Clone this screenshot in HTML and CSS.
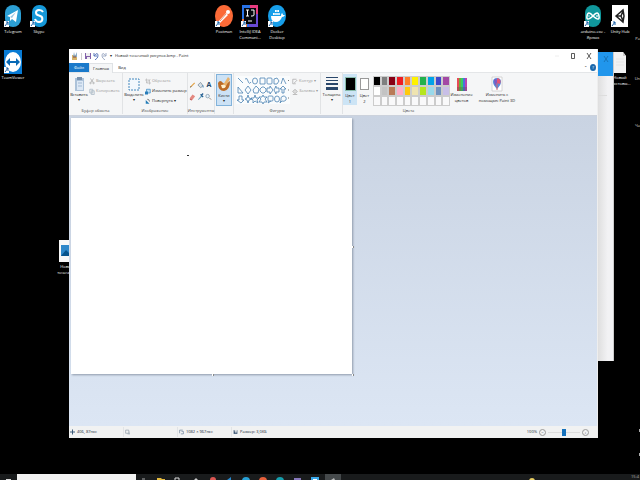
FILE: index.html
```html
<!DOCTYPE html>
<html lang="ru">
<head>
<meta charset="utf-8">
<title>Новый точечный рисунок.bmp - Paint</title>
<link rel="stylesheet" href="styles.css">
</head>
<body>
<main class="desktop">
  <a class="shortcut at-telegram" href="#"><svg viewBox="0 0 18 24"><rect x="1" y="1" width="16" height="22" rx="8" fill="#2c9fd4"/><path d="M3 12 14 6 12 18 8 15 6 17 6 13Z" fill="#fff"/><path d="M6 13 12 8 8 14Z" fill="#9cc8e4"/><path d="M0 17h5v6H0z" fill="#fff"/><path d="M1 22 4 18M2 18h2v3" stroke="#1760a8" fill="none"/></svg><span>Telegram</span></a>
  <a class="shortcut at-skype" href="#"><svg viewBox="0 0 18 24"><rect x="2" y="1" width="15" height="22" rx="7" fill="#1598d8"/><path d="M13 8Q12 6 9 6C5 6 5 11 9 11.500C14 12.500 13 18 9 18Q6 18 5 15" stroke="#fff" stroke-width="2" fill="none"/><path d="M0 17h5v6H0z" fill="#fff"/><path d="M1 22 4 18M2 18h2v3" stroke="#1760a8" fill="none"/></svg><span>Skype</span></a>
  <a class="shortcut at-teamviewer" href="#"><svg viewBox="0 0 18 24"><path d="M0 0h18v24H0z" fill="#087bd4"/><ellipse cx="9" cy="12" rx="8" ry="10" fill="#fff"/><path d="M2 12 6 8v3h6V8l4 4-4 4v-3H6v3Z" fill="#0869b5"/><path d="M0 17h5v6H0z" fill="#fff"/><path d="M1 22 4 18M2 18h2v3" stroke="#1760a8" fill="none"/></svg><span>TeamViewer</span></a>
  <a class="shortcut at-postman" href="#"><svg viewBox="0 0 18 24"><ellipse cx="9" cy="12" rx="9" ry="11" fill="#fb6a37"/><path d="m3 18 8-9 2 2-8 8Z" fill="#fff"/><circle cx="13" cy="8" r="2" fill="#fff"/><path d="m5 17 6-7" stroke="#e29070"/><path d="M0 17h5v6H0z" fill="#fff"/><path d="M1 22 4 18M2 18h2v3" stroke="#1760a8" fill="none"/></svg><span>Postman</span></a>
  <a class="shortcut at-idea" href="#"><svg viewBox="0 0 18 24"><path d="M1 1h9v22H1z" fill="#2873e8"/><path d="M9 1h8v9H9z" fill="#e83b80"/><path d="M8 10h9v13H8z" fill="#694ad6"/><path d="M1 15h5v8H1z" fill="#f27642"/><path d="M3 4h12v16H3z" fill="#05070d"/><path d="M5 6h3M6.500 6v6M5 12h3M10 6h3v5q0 1-2 1h-1M7 17h4" stroke="#fff" fill="none"/><path d="M0 17h5v6H0z" fill="#fff"/><path d="M1 22 4 18M2 18h2v3" stroke="#1760a8" fill="none"/></svg><span>IntelliJ IDEA<br>Communi...</span></a>
  <a class="shortcut at-docker" href="#"><svg viewBox="0 0 18 24"><ellipse cx="9" cy="12" rx="9" ry="11" fill="#179ee9"/><path d="M3 12h10q0-2 1-3 1 1 1 2h2q-1 2-3 2-2 5-6 5-5 0-5-6Z" fill="#fff"/><path d="M5 9h7v2H5zM7 6h4v2H7z" fill="#fff"/><path d="M7 9v2M9 6v5M11 9v2" stroke="#179ee9" stroke-width=".5"/><path d="M0 17h5v6H0z" fill="#fff"/><path d="M1 22 4 18M2 18h2v3" stroke="#1760a8" fill="none"/></svg><span>Docker<br>Desktop</span></a>
  <a class="shortcut at-arduino" href="#"><svg viewBox="0 0 18 24"><rect x="1" y="1" width="16" height="22" rx="8" fill="#10979c"/><path d="M9 12Q4 6 3 12T9 12Q14 6 15 12T9 12Z" stroke="#fff" stroke-width="1.500" fill="none"/><path d="M4 12h2M12 12h2M13 11v2" stroke="#fff" stroke-width=".7"/><path d="M0 17h5v6H0z" fill="#fff"/><path d="M1 22 4 18M2 18h2v3" stroke="#1760a8" fill="none"/></svg><span>arduino.exe -<br>Ярлык</span></a>
  <a class="shortcut at-unity" href="#"><svg viewBox="0 0 18 24"><path d="M1 1h16v22H1z" fill="#fff"/><path d="m5 12 7-6 1 6-1 6ZM5 12h5M10 12l2-5M10 12l2 5" stroke="#222" stroke-width="1.500" fill="none"/><path d="M0 17h5v6H0z" fill="#fff"/><path d="M1 22 4 18M2 18h2v3" stroke="#1760a8" fill="none"/></svg><span>Unity Hub</span></a>
  <a class="shortcut at-file" href="#"><svg viewBox="0 0 18 24"><path d="M3 2h9l3 4v17H3z" fill="#f1f1f1"/><path d="M12 2v4h3" fill="#ccc"/><path d="M5 9h8M5 12h8M5 15h8" stroke="#ddd" stroke-width=".6"/></svg><span>Новый<br>текстовы...</span></a>
  <a class="shortcut at-image" href="#"><svg viewBox="0 0 18 24"><path d="M1 1h17v22H1z" fill="#f7f7f7"/><path d="M3 6h15v11H3z" fill="#2e87c9"/><path d="m3 17 5-6 3 3 3-4 4 3v4Z" fill="#07538c"/></svg><span>Новый<br>точечный</span></a>
  <span class="edge-label at-edge1">Ра</span><span class="edge-label at-edge2">Un</span><span class="edge-label at-edge3">Ча</span><i class="edge-dot at-edge4"></i><i class="edge-dot at-edge5"></i>

  <section class="back-window"><header><button aria-label="Закрыть окно"><svg class="glyph" viewBox="0 0 8 8"><path d="m2 1 4 6M6 1 2 7" stroke="#176ba9" stroke-width=".8"/></svg></button></header><hr></section>

  <section class="paint">
    <header class="titlebar">
      <svg class="glyph" viewBox="0 0 8 8"><path d="M1 3h5v5H1z" fill="#d5b36a"/><path d="m2 5 1-5 1 4 2-4v5" fill="#89abc9"/><path d="M2 5h3" stroke="#8b4d35"/></svg>
      <i class="bar"></i>
      <button aria-label="Сохранить"><svg class="glyph" viewBox="0 0 8 8"><path d="M1 1h6v6H1z" fill="#8261aa"/><path d="M2 1h4v3H2zM3 5h3v2H3z" fill="#eee"/></svg></button>
      <button aria-label="Отменить"><svg class="glyph" viewBox="0 0 8 8"><path d="M2 1v3h3M2 4q4-5 4 0 0 2-3 4" fill="none" stroke="#5b78bb"/></svg></button>
      <button aria-label="Повторить"><svg class="glyph" viewBox="0 0 8 8"><path d="M6 1v3H3M6 4Q2-1 2 4q0 2 3 4" fill="none" stroke="#a0adc6"/></svg></button>
      <button aria-label="Настройка панели" class="arrow">▾</button>
      <h1>Новый точечный рисунок.bmp - Paint</h1>
      <div class="window-buttons">
        <button aria-label="Свернуть"><svg class="glyph" viewBox="0 0 8 8"><path d="M2 4h4" stroke="#eee"/></svg></button>
        <button aria-label="Развернуть"><svg class="glyph" viewBox="0 0 8 8"><path d="M2.500 1.500h3v5h-3z" fill="none" stroke="#333" stroke-width=".8"/></svg></button>
        <button aria-label="Закрыть"><svg class="glyph" viewBox="0 0 8 8"><path d="m2 1 4 6M6 1 2 7" stroke="#333" stroke-width=".8"/></svg></button>
      </div>
    </header>
    <nav class="tabs"><button class="file">Файл</button><button class="active">Главная</button><button class="view">Вид</button><span class="help"><button aria-label="Свернуть ленту">⌃</button><button class="question" aria-label="Справка">?</button></span></nav>
    <div class="ribbon">
      <section class="group clipboard"><div class="tools">
        <button class="large"><svg viewBox="0 0 12 16"><path d="M2 2h9v13H2z" fill="#acc2d9"/><path d="M4 1h5v3H4z" fill="#7992ad"/><path d="M4 5h6v9H4z" fill="#dce8f5"/><path d="M5 7h4M5 10h4" stroke="#a3b9d3"/></svg><span>Вставить</span><i>▾</i></button>
        <div class="commands"><button class="disabled"><svg class="glyph" viewBox="0 0 8 8"><path d="m2 0 3 5M6 0 3 5" stroke="#aaa"/><circle cx="2" cy="6" r="1" fill="none" stroke="#aaa"/><circle cx="6" cy="6" r="1" fill="none" stroke="#aaa"/></svg>Вырезать</button><button class="disabled"><svg class="glyph" viewBox="0 0 8 8"><path d="M1 1h4v5H1zM3 3h4v5H3z" fill="#eee" stroke="#a9b9c7"/></svg>Копировать</button></div>
      </div><h2>Буфер обмена</h2></section>
      <section class="group image"><div class="tools">
        <button class="large"><svg viewBox="0 0 12 16"><path d="M1 3h10v11H1z" fill="#f2f8fd" stroke="#4488bd" stroke-dasharray="2 1"/></svg><span>Выделить</span><i>▾</i></button>
        <div class="commands"><button class="disabled"><svg class="glyph" viewBox="0 0 8 8"><path d="M2 0v6h6M0 2h6v6M2 6l5-5" fill="none" stroke="#bbb"/></svg>Обрезать</button><button><svg class="glyph" viewBox="0 0 8 8"><path d="M2 1h5v5H2z" fill="#c0dff5" stroke="#408cc4"/><path d="M0 4h4v4H0z" fill="#287cb9"/></svg>Изменить размер</button><button><svg class="glyph" viewBox="0 0 8 8"><path d="M1 7V2l5 5Z" fill="#237db8"/><path d="M3 1q3 0 3 3" fill="none" stroke="#555"/></svg>Повернуть ▾</button></div>
      </div><h2>Изображение</h2></section>
      <section class="group instruments"><div class="tool-grid">
        <button aria-label="Карандаш"><svg class="glyph" viewBox="0 0 8 8"><path d="m1 7 1-2 4-4 1 1-4 4Z" fill="#e4a347"/><path d="m1 7 1-2 1 1Z" fill="#555"/></svg></button><button aria-label="Заливка"><svg class="glyph" viewBox="0 0 8 8"><path d="m1 4 3-3 3 4-3 2Z" fill="#d7e0e7" stroke="#8794a0"/><path d="M6 4q2 2 1 3" stroke="#4b91c2" fill="none"/></svg></button><button aria-label="Текст" class="letter">A</button><button aria-label="Ластик"><svg class="glyph" viewBox="0 0 8 8"><path d="m1 5 3-4 3 2-3 4Z" fill="#e48980"/><path d="m1 5 3 2-1 1-2-1Z" fill="#c65e5a"/></svg></button><button aria-label="Палитра"><svg class="glyph" viewBox="0 0 8 8"><path d="m1 7 4-5 1 1-4 4Z" fill="#62a1bd"/><path d="m4 1 3 3M5 2l2-2" stroke="#245f92" stroke-width="1.500"/></svg></button><button aria-label="Масштаб"><svg class="glyph" viewBox="0 0 8 8"><circle cx="3" cy="3" r="2" fill="#e7f4fd" stroke="#8aa0b1"/><path d="m5 5 2 2" stroke="#8b7967"/></svg></button>
      </div><h2>Инструменты</h2></section>
      <section class="group brushes"><button class="large selected"><svg viewBox="0 0 12 16"><path d="M0 6q2-4 5 0 3 2 7-2 0 9-6 10-6 0-6-8Z" fill="#bc6b25"/><path d="M5 8 10 0l2 2-4 7Z" fill="#e8b26b"/><path d="M3 8q3-1 5 1-1 3-4 2Z" fill="#fff1cf"/></svg><span>Кисти</span><i>▾</i></button></section>
      <section class="group shapes"><div class="tools">
        <button class="gallery" aria-label="Галерея фигур"><svg viewBox="0 0 54 28" fill="none" stroke="#4c83b2" stroke-width=".8"><path d="m2 2 5 5M9 3q2-2 3 2t3 1"/><ellipse cx="19" cy="5" rx="2.500" ry="3"/><path d="M24 2h5v6h-5z"/><rect x="31" y="2" width="5" height="6" rx="1"/><path d="m38 3 3-1 2 3-2 3h-3zM45 8l2-6 3 6M2 11v6h5ZM9 14l3-4 3 4-3 4ZM17 14l3-4 3 3-1 4h-4ZM24 13l2-2h2l2 2v2l-2 2h-2l-2-2ZM31 12h3v-2l3 4-3 4v-2h-3ZM43 12h-3v-2l-2 4 2 4v-2h3ZM46 17v-4h-2l3-3 3 3h-2v4ZM3 20h3v4h2l-3 3-4-3h2ZM12 19l1 3 3 1-3 1-1 3-1-3-2-1 2-1ZM19 19l1 3h3l-2 2 1 3-3-2-2 2v-3l-2-2h3ZM27 19l1 2h3l-2 2 2 3h-3l-1 2-1-2h-3l2-3-2-2h3Z"/><rect x="32" y="20" width="5" height="5" rx="1"/><path d="m33 25-1 2 3-2"/><ellipse cx="41" cy="23" rx="2.500" ry="3"/><path d="M45 24q-1-3 2-4 4 0 3 4-2 2-4 1l-2 2Z"/><path d="m52 5 1-1M52 14h1M52 22h1" stroke="#555"/></svg></button>
        <div class="commands"><button class="disabled"><svg class="glyph" viewBox="0 0 8 8"><path d="M1 1h5M1 1v6h4M3 6l4-4" fill="none" stroke="#aaa"/></svg>Контур ▾</button><button class="disabled"><svg class="glyph" viewBox="0 0 8 8"><path d="m1 4 3-3 3 3-3 3ZM1 8h6" fill="#ddd" stroke="#aaa"/></svg>Заливка ▾</button></div>
      </div><h2>Фигуры</h2></section>
      <section class="group thickness"><button class="large"><svg viewBox="0 0 12 14"><path d="M0 1h12v1H0zM0 4h12v1H0zM0 7h12v2H0zM0 11h12v3H0z" fill="#29476b"/></svg><span>Толщина</span><i>▾</i></button></section>
      <section class="group colors"><div class="tools">
        <button class="ink primary"><i></i><span>Цвет<br>1</span></button><button class="ink"><i></i><span>Цвет<br>2</span></button>
        <div class="palette"><button class="black" aria-label="Чёрный"></button><button class="gray" aria-label="Серый"></button><button class="maroon" aria-label="Бордовый"></button><button class="red" aria-label="Красный"></button><button class="orange" aria-label="Оранжевый"></button><button class="yellow" aria-label="Жёлтый"></button><button class="green" aria-label="Зелёный"></button><button class="sky" aria-label="Голубой"></button><button class="indigo" aria-label="Индиго"></button><button class="purple" aria-label="Лиловый"></button><button class="white" aria-label="Белый"></button><button class="silver" aria-label="Светло-серый"></button><button class="brown" aria-label="Коричневый"></button><button class="pink" aria-label="Розовый"></button><button class="gold" aria-label="Золотой"></button><button class="cream" aria-label="Бежевый"></button><button class="lime" aria-label="Лайм"></button><button class="aqua" aria-label="Бирюзовый"></button><button class="steel" aria-label="Сизый"></button><button class="lavender" aria-label="Лаванда"></button><button aria-label="Ячейка 1"></button><button aria-label="Ячейка 2"></button><button aria-label="Ячейка 3"></button><button aria-label="Ячейка 4"></button><button aria-label="Ячейка 5"></button><button aria-label="Ячейка 6"></button><button aria-label="Ячейка 7"></button><button aria-label="Ячейка 8"></button><button aria-label="Ячейка 9"></button><button aria-label="Ячейка 10"></button></div>
        <button class="large edit"><svg viewBox="0 0 12 16"><path d="M1 2h3v13H1z" fill="#e84b58"/><path d="M3 2h2v13H3z" fill="#6cac3f"/><path d="M5 2h2v13H5z" fill="#35cd63"/><path d="M7 2h2v13H7z" fill="#4b72dc"/><path d="M9 2h2v13H9z" fill="#bd43b0"/><path d="M1 11h10v4H1z" fill="#555" opacity=".35"/></svg><span>Изменение<br>цветов</span></button>
      </div><h2>Цвета</h2></section>
      <section class="group paint3d"><button class="large"><svg viewBox="0 0 12 16"><path d="M1 1h10v14H1z" fill="#fff" stroke="#ccc" stroke-width=".8"/><path d="M2 6q0-4 4-4t4 4q0 3-4 7-4-4-4-7" fill="#558ddd"/><path d="M6 2q5 1 3 6L6 7Z" fill="#e55276"/><path d="M3 4q3-3 3 3l-2 3Z" fill="#8058be"/><path d="M6 7v7" stroke="#d85f6b"/></svg><span>Изменить с<br>помощью Paint 3D</span></button></section>
    </div>
    <div class="workspace"><div class="canvas"><i class="stroke"></i><i class="handle east"></i><i class="handle south"></i><i class="handle corner"></i></div></div>
    <footer class="status">
      <span><svg class="glyph" viewBox="0 0 8 8"><path d="M4 0v8M0 4h8" stroke="#345374" stroke-width="1.500"/></svg>406, 87пкс</span><span><svg class="glyph" viewBox="0 0 8 8"><path d="M1 1h5v5H1zM4 7h4V3" fill="none" stroke="#8793a1"/></svg></span><span><svg class="glyph" viewBox="0 0 8 8"><path d="M1 1h5M1 1v5M4 3h3v4H3" fill="none" stroke="#5b7490"/></svg>1082 × 967пкс</span><span><svg class="glyph" viewBox="0 0 8 8"><path d="M1 1h6v6H1z" fill="#35516f"/><path d="M3 1h3v2H3zM3 5h3" fill="#eee" stroke="#eee"/></svg>Размер: 3,0КБ</span>
      <div class="zoom"><label for="zoom">100%</label><button aria-label="Уменьшить">−</button><input id="zoom" type="range" min="0" max="100" value="50"><button aria-label="Увеличить">+</button></div>
    </footer>
  </section>

  <footer class="taskbar"><button aria-label="Пуск" class="start"><svg viewBox="0 0 14 6"><path d="M6 5h5v1H6z" fill="#ddd"/></svg></button><input type="search" aria-label="Поиск"><div class="apps">
    <button aria-label="Представление задач"><svg viewBox="0 0 14 6"><path d="M6 5h3" stroke="#aaa"/></svg></button><button aria-label="Проводник"><svg viewBox="0 0 14 6"><path d="M4 4h4l1 1h3v1H4z" fill="#e4ba3e"/></svg></button><button aria-label="Магазин"><svg viewBox="0 0 14 6"><path d="M5 6V4h4v2" stroke="#ddd" fill="none"/></svg></button><button aria-label="Почта"><svg viewBox="0 0 14 6"><path d="M6 6l2-2 2 2" fill="#ccc"/></svg></button><button aria-label="Браузер"><svg viewBox="0 0 14 6"><circle cx="8" cy="6" r="3" fill="#dc5753"/></svg></button><button aria-label="Код"><svg viewBox="0 0 14 6"><path d="m5 6 4-3v3" fill="#288bd0"/></svg></button><button aria-label="Telegram"><svg viewBox="0 0 14 6"><circle cx="7" cy="7" r="4" fill="#28a2d8"/></svg></button><button aria-label="Postman"><svg viewBox="0 0 14 6"><circle cx="7" cy="7" r="4" fill="#e7603b"/></svg></button><button aria-label="Arduino"><svg viewBox="0 0 14 6"><circle cx="7" cy="7" r="4" fill="#159fad"/></svg></button><button aria-label="Viber"><svg viewBox="0 0 14 6"><path d="M3 4h7v2H3z" fill="#8779bd"/></svg></button><button aria-label="TeamViewer"><svg viewBox="0 0 14 6"><path d="M3 3h8v3H3z" fill="#39a7e9"/><path d="M5 5h4v1H5z" fill="#fff"/></svg></button><button aria-label="Paint" class="running"><svg viewBox="0 0 14 6"><path d="m6 6 3-2 1 2" fill="#bbb"/></svg></button>
  </div><i class="weather"></i><time>15:4</time></footer>
</main>
</body>
</html>
```

FILE: styles.css
```css
* { box-sizing: border-box; }
html, body { height: 100%; margin: 0; }
body { background: #000; font: 4px/6px "Open Sans", "Noto Sans", sans-serif; color: #222; }
button { border: 0; padding: 0; margin: 0; background: none; font: inherit; color: inherit; }
h1, h2 { margin: 0; font: inherit; }
i { font-style: normal; }
svg { display: block; }
.glyph { width: 8px; height: 8px; flex: none; }
.desktop { position: relative; min-height: 100%; overflow: hidden; background: #000; }

.shortcut { position: absolute; width: 28px; display: flex; flex-direction: column; align-items: center; gap: 1px; color: #fff; text-align: center; text-decoration: none; white-space: nowrap; }
.shortcut svg { width: 18px; height: 24px; }
.at-telegram { left: -1px; top: 4px; }
.at-skype { left: 25px; top: 4px; }
.at-teamviewer { left: -1px; top: 50px; }
.at-postman { left: 210px; top: 4px; }
.at-idea { left: 236px; top: 4px; }
.at-docker { left: 263px; top: 4px; }
.at-arduino { right: 33px; top: 4px; }
.at-unity { right: 6px; top: 4px; }
.at-file { right: 6px; top: 50px; }
.at-image { left: 53px; top: 239px; }
.edge-label { position: absolute; right: 0; color: #ddd; }
.edge-dot { position: absolute; right: 0; width: 1px; height: 3px; background: #aaa; }
.at-edge1 { top: 36px; }
.at-edge2 { top: 76px; }
.at-edge3 { top: 123px; }
.at-edge4 { top: 429px; }
.at-edge5 { top: 453px; }

.back-window { position: absolute; left: 560px; right: 26px; top: 52px; bottom: 119px; background: linear-gradient(90deg, #ddd 70%, #f2f2f4 90%); border-right: 1px solid #ccc; }
.back-window header { height: 24px; background: #2196ec; display: flex; justify-content: flex-end; align-items: flex-start; padding: 3px; }
.back-window hr { margin: 19px 6px; border: 0; border-top: 1px solid #ddd; }

.paint { position: absolute; left: 69px; right: 42px; top: 49px; bottom: 42px; display: flex; flex-direction: column; background: #fff; border-right: 1px solid #eee; }
.titlebar { height: 14px; display: flex; align-items: center; padding-left: 2px; background: #fff; }
.bar { width: 1px; height: 7px; background: #ccc; margin: 0 2px; }
.titlebar .arrow { margin-right: 2px; width: 5px; }
.window-buttons { margin-left: auto; display: flex; gap: 8px; padding-right: 4px; }
.tabs { height: 10px; display: flex; background: #fff; border-bottom: 1px solid #e4e6e8; }
.tabs > button { width: 24px; }
.tabs .file { width: 20px; background: #1979ca; color: #fff; }
.tabs .active { background: #f5f6f7; border: 1px solid #dfe2e5; border-bottom: 0; height: 10px; }
.tabs .view { width: 18px; }
.help { margin-left: auto; display: flex; align-items: center; gap: 3px; padding-right: 1px; }
.question { width: 6px; height: 7px; border-radius: 50%; background: #1c68ac; color: #fff; }

.ribbon { height: 43px; display: flex; background: #f5f6f7; border-bottom: 1px solid #ccd2dc; }
.group { height: 41px; display: flex; flex-direction: column; align-items: center; justify-content: space-between; border-right: 1px solid #e1e3e5; }
.group h2 { color: #444; text-align: center; white-space: nowrap; }
.tools { display: flex; align-self: stretch; }
.clipboard { width: 54px; }
.image { width: 65px; }
.instruments { width: 27px; }
.brushes { width: 19px; }
.shapes { width: 87px; }
.thickness { width: 22px; }
.colors { width: 131px; border: 0; }
.paint3d { width: 46px; border: 0; }
.large { min-width: 20px; height: 32px; display: flex; flex-direction: column; align-items: center; padding-top: 3px; white-space: nowrap; }
.large svg { width: 12px; height: 16px; flex: none; }
.large i { line-height: 4px; }
.large.selected { min-width: 16px; margin-top: 1px; background: #cde2f5; border: 1px solid #82b3db; padding-top: 2px; }
.commands { display: flex; flex-direction: column; padding-top: 3px; }
.commands button { height: 10px; display: flex; align-items: center; gap: 1px; white-space: nowrap; }
.commands .glyph { width: 6px; height: 7px; }
.commands .disabled { color: #999; }
.image .large { min-width: 22px; }
.tool-grid { display: grid; grid-template-columns: repeat(3, 8px); grid-auto-rows: 12px; align-items: center; padding-top: 6px; }
.tool-grid .glyph { width: 7px; height: 8px; }
.letter { font-size: 7px; font-weight: bold; color: #234866; }
.gallery { width: 54px; height: 28px; margin: 3px 2px 0 2px; background: #fafcfd; flex: none; }
.gallery svg { width: 54px; height: 28px; }
.thickness .large svg { height: 14px; margin-bottom: 2px; }
.ink { width: 15px; height: 31px; margin-top: 1px; display: flex; flex-direction: column; align-items: center; gap: 3px; padding-top: 4px; }
.ink i { width: 9px; height: 12px; background: #fff; border: 1px solid #999; }
.ink.primary { width: 14px; background: #cce4f5; padding-top: 3px; gap: 2px; }
.ink.primary i { width: 11px; height: 14px; background: #000; border-color: #8ba; }
.palette { display: grid; grid-template-columns: repeat(10, 1fr); width: 77px; height: 30px; margin: 3px 0 0 1px; flex: none; }
.palette button { border: 1px solid #ccc; background: #f9f9fa; }
.palette .black { background: #000; }
.palette .gray { background: #7f7f7f; }
.palette .maroon { background: #880015; }
.palette .red { background: #ed1c24; }
.palette .orange { background: #ff7f27; }
.palette .yellow { background: #fff200; }
.palette .green { background: #22b14c; }
.palette .sky { background: #00a2e8; }
.palette .indigo { background: #3f48cc; }
.palette .purple { background: #a349a4; }
.palette .white { background: #fff; }
.palette .silver { background: #c3c3c3; }
.palette .brown { background: #b97a57; }
.palette .pink { background: #ffaec9; }
.palette .gold { background: #ffc90e; }
.palette .cream { background: #efe4b0; }
.palette .lime { background: #b5e61d; }
.palette .aqua { background: #99d9ea; }
.palette .steel { background: #7092be; }
.palette .lavender { background: #c8bfe7; }
.edit { width: 23px; }

.workspace { flex: 1; min-height: 0; padding: 2px; background: linear-gradient(#c9d3e2, #dce6f4); }
.canvas { position: relative; width: 281px; height: 256px; max-width: 100%; background: #fff; box-shadow: 1px 1px 2px #8f9aaa; }
.stroke { position: absolute; left: 116px; top: 37px; width: 2px; height: 1px; background: #333; }
.handle { position: absolute; width: 2px; height: 2px; background: #fff; border-right: 1px solid #888; }
.east { right: -2px; top: 50%; }
.south { left: 50%; bottom: -2px; }
.corner { right: -2px; bottom: -2px; }

.status { height: 12px; display: grid; grid-template-columns: 55px 54px 54px 54px 1fr; align-items: center; background: #f1f2f2; color: #123; }
.status > span { height: 10px; display: flex; align-items: center; gap: 2px; padding-left: 1px; border-right: 1px solid #e2e4e6; white-space: nowrap; }
.status > span:nth-child(4) { border: 0; }
.status .glyph { width: 5px; height: 6px; }
.zoom { display: flex; align-items: center; justify-content: flex-end; gap: 2px; padding-right: 8px; }
.zoom button { width: 7px; height: 7px; border: 1px solid #999; border-radius: 50%; line-height: 5px; }
.zoom input { appearance: none; width: 32px; height: 8px; margin: 0; background: linear-gradient(#ddd, #ddd) center / 100% 1px no-repeat; }
.zoom input::-webkit-slider-thumb { appearance: none; width: 4px; height: 7px; background: #1672bd; }

.taskbar { position: absolute; left: 0; right: 0; bottom: 0; height: 6px; display: flex; background: #191b1c; overflow: hidden; color: #bbb; }
.taskbar svg { width: 14px; height: 6px; }
.start { width: 17px; }
.taskbar input { width: 119px; height: 12px; border: 0; margin: 0; padding: 0; background: #f2f2f2; }
.apps { display: flex; justify-content: space-between; width: 205px; }
.apps .running { background: #45494b; width: 16px; }
.weather { width: 6px; height: 6px; margin: 4px auto 0 188px; border-radius: 50%; background: #e9cf63; }
.taskbar time { line-height: 6px; padding-right: 1px; }
```
